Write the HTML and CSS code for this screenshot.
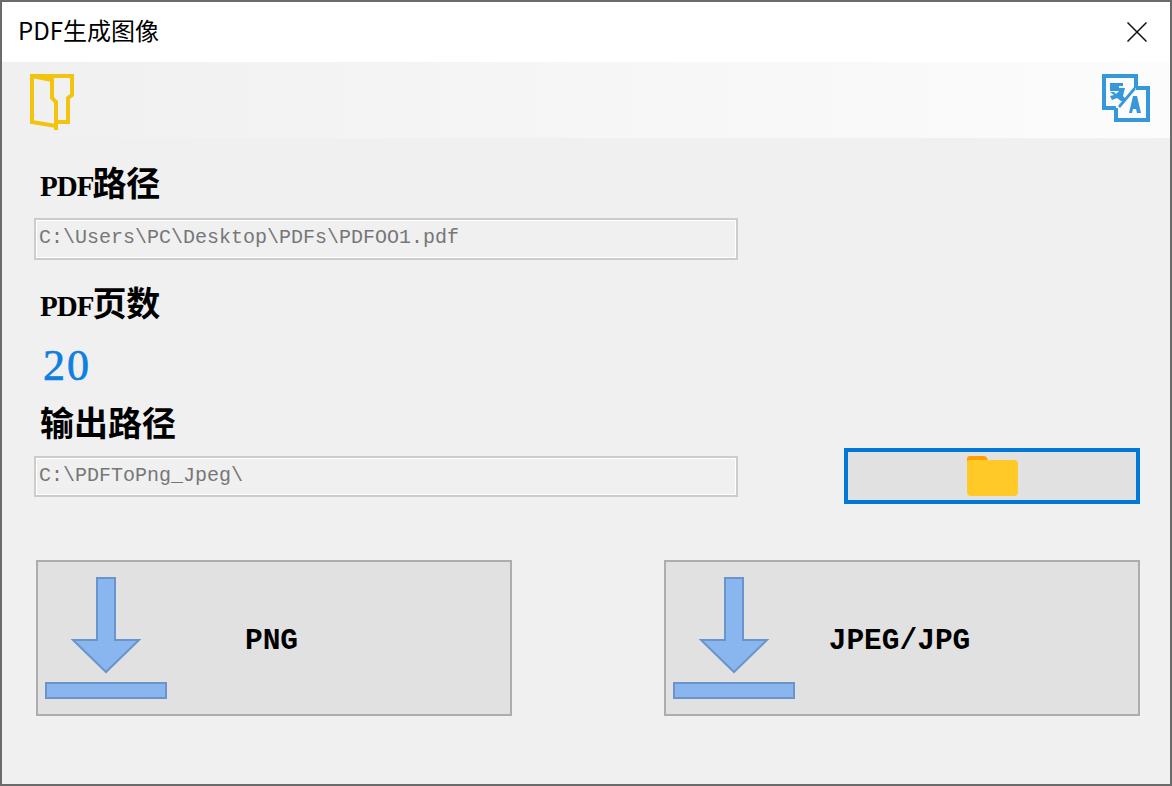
FILE: index.html
```html
<!DOCTYPE html>
<html lang="zh-CN">

<head>
    <meta charset="UTF-8">
    <title>PDF生成图像</title>
    <link rel="stylesheet" href="styles.css">
</head>

<body>
    <div class="window">
        <!-- Title bar -->
        <div class="title-bar">
            <span class="title">PDF生成图像</span>
            <svg class="close-icon" width="20" height="20" viewBox="0 0 20 20">
                <path d="M0.5 0.5L19.5 19.5M19.5 0.5L0.5 19.5" stroke="#111" stroke-width="1.500" fill="none" />
            </svg>
        </div>

        <!-- Toolbar -->
        <div class="toolbar">
            <svg width="46" height="58" viewBox="0 0 46 58">
                <path d="M2 2H42V21L38 24V48H26" fill="none" stroke="#f2c40f" stroke-width="4" />
                <path d="M2 2V48L14 50L26 52V28L22 24V6Z" fill="none" stroke="#f2c40f" stroke-width="4" />
                <path d="M26 50V56" fill="none" stroke="#f2c40f" stroke-width="4" />
            </svg>
            <svg width="48" height="48" viewBox="0 0 48 48">
                <path d="M34 14V2H2V34H14" fill="none" stroke="#3498db" stroke-width="4" />
                <path d="M34 14H46V46H14V34" fill="none" stroke="#3498db" stroke-width="4" />
                <path d="M8 9H21V12H17V14H23L21 22L24 25L21 27H19L15 24L10 26L8 22L12 21L8 18H12L14 20L17 17H8Z" fill="#3498db" />
                <path d="M16 32L32 13L34 15L18 34Z" fill="#3498db" />
                <path d="M27 39L31 22H35L39 39H35L34 35H31L30 39Z" fill="#3498db" />
            </svg>
        </div>

        <!-- Main form -->
        <div class="content">
            <div class="label"><span class="latin">PDF</span>路径</div>
            <input class="path-input" type="text" value="C:\Users\PC\Desktop\PDFs\PDFOO1.pdf" readonly>

            <div class="label page-label"><span class="latin">PDF</span>页数</div>
            <div class="page-count">20</div>

            <div class="label output-label">输出路径</div>
            <div class="output-row">
                <input class="path-input" type="text" value="C:\PDFToPng_Jpeg\" readonly>
                <button class="browse-btn" type="button">
                    <svg width="52" height="40" viewBox="0 0 52 40">
                        <path d="M1 6V3Q1 0 4 0H18Q20 0 21 2L23 6Z" fill="#ffa000" />
                        <path d="M1 7Q1 4 4 4H48Q52 4 52 8V36Q52 40 48 40H5Q1 40 1 36Z" fill="#ffca28" />
                    </svg>
                </button>
            </div>

            <div class="export-row">
                <button class="export-btn" type="button">
                    <svg class="download-icon" width="124" height="124" viewBox="0 0 124 124">
                        <path d="M53 2H71V64H95L62 96L29 64H53Z" fill="#8ab6f0" stroke="#6a95cc" stroke-width="2" />
                        <rect x="2" y="107" width="120" height="15" fill="#8ab6f0" stroke="#6a95cc" stroke-width="2" />
                    </svg>
                    <span class="export-text">PNG</span>
                </button>
                <button class="export-btn" type="button">
                    <svg class="download-icon" width="124" height="124" viewBox="0 0 124 124">
                        <path d="M53 2H71V64H95L62 96L29 64H53Z" fill="#8ab6f0" stroke="#6a95cc" stroke-width="2" />
                        <rect x="2" y="107" width="120" height="15" fill="#8ab6f0" stroke="#6a95cc" stroke-width="2" />
                    </svg>
                    <span class="export-text">JPEG/JPG</span>
                </button>
            </div>
        </div>
    </div>
</body>

</html>
```

FILE: styles.css
```css
* {
    box-sizing: border-box;
}

body {
    margin: 0;
    background-color: #f0f0f0;
}

.window {
    width: 1172px;
    height: 786px;
    border: 2px solid #6b6b6b;
    background-color: #f0f0f0;
    display: flex;
    flex-direction: column;
    overflow: hidden;
}

/* Title bar */
.title-bar {
    height: 60px;
    background-color: #fff;
    display: flex;
    justify-content: space-between;
    align-items: center;
    padding: 0 23px 0 16px;
}

.title {
    font-family: "Noto Sans CJK SC", sans-serif;
    font-size: 24px;
    line-height: 32px;
    margin-bottom: 4px;
    color: #000;
}

/* Toolbar */
.toolbar {
    height: 76px;
    background: linear-gradient(to right, #f0f0f0, #fcfcfc);
    display: flex;
    justify-content: space-between;
    align-items: flex-start;
    padding: 12px 20px 0 28px;
}

/* Main form */
.content {
    flex: 1;
    padding: 26px 30px 0 32px;
    display: flex;
    flex-direction: column;
}

.label {
    height: 40px;
    line-height: 36px;
    padding-left: 6px;
    font-family: "Noto Sans CJK SC", sans-serif;
    font-size: 34px;
    font-weight: 700;
    color: #000;
}

.latin {
    font-family: "Liberation Serif", serif;
    font-size: 29px;
    letter-spacing: -1px;
    margin-right: -1px;
}

.page-label {
    margin-top: 24px;
}

.output-label {
    margin-top: 14px;
}

.path-input {
    display: block;
    width: 704px;
    height: 42px;
    flex: none;
    margin: 14px 0 0;
    padding: 0 3px 3px;
    border: 2px solid #ccc;
    box-shadow: inset 0 0 0 1px #fff;
    outline: none;
    background-color: #f0f0f0;
    font-family: "Liberation Mono", monospace;
    font-size: 20px;
    color: #777;
}

.page-count {
    height: 48px;
    line-height: 48px;
    margin-top: 18px;
    padding-left: 9px;
    font-family: "Liberation Serif", serif;
    font-size: 44px;
    letter-spacing: 2px;
    -webkit-text-stroke: 0.7px #0f7fe0;
    color: #0f7fe0;
}

.output-row {
    display: flex;
    justify-content: space-between;
    align-items: flex-start;
    margin-top: 4px;
}

.output-row .path-input {
    height: 41px;
    margin: 8px 0 0;
}

.browse-btn {
    width: 296px;
    height: 56px;
    padding: 0;
    border: 4px solid #0078d7;
    background-color: #e1e1e1;
    display: flex;
    justify-content: center;
    align-items: center;
}

.export-row {
    display: flex;
    justify-content: space-between;
    margin-top: 56px;
    padding-left: 2px;
}

.export-btn {
    width: 476px;
    height: 156px;
    padding: 0;
    border: 2px solid #adadad;
    background-color: #e1e1e1;
    display: grid;
    align-items: center;
}

.download-icon,
.export-text {
    grid-area: 1 / 1;
}

.download-icon {
    justify-self: start;
    margin-left: 6px;
}

.export-text {
    justify-self: center;
    margin: 5px 5px 0 0;
    font-family: "Liberation Mono", monospace;
    font-size: 29.5px;
    font-weight: 700;
    color: #000;
}
```
